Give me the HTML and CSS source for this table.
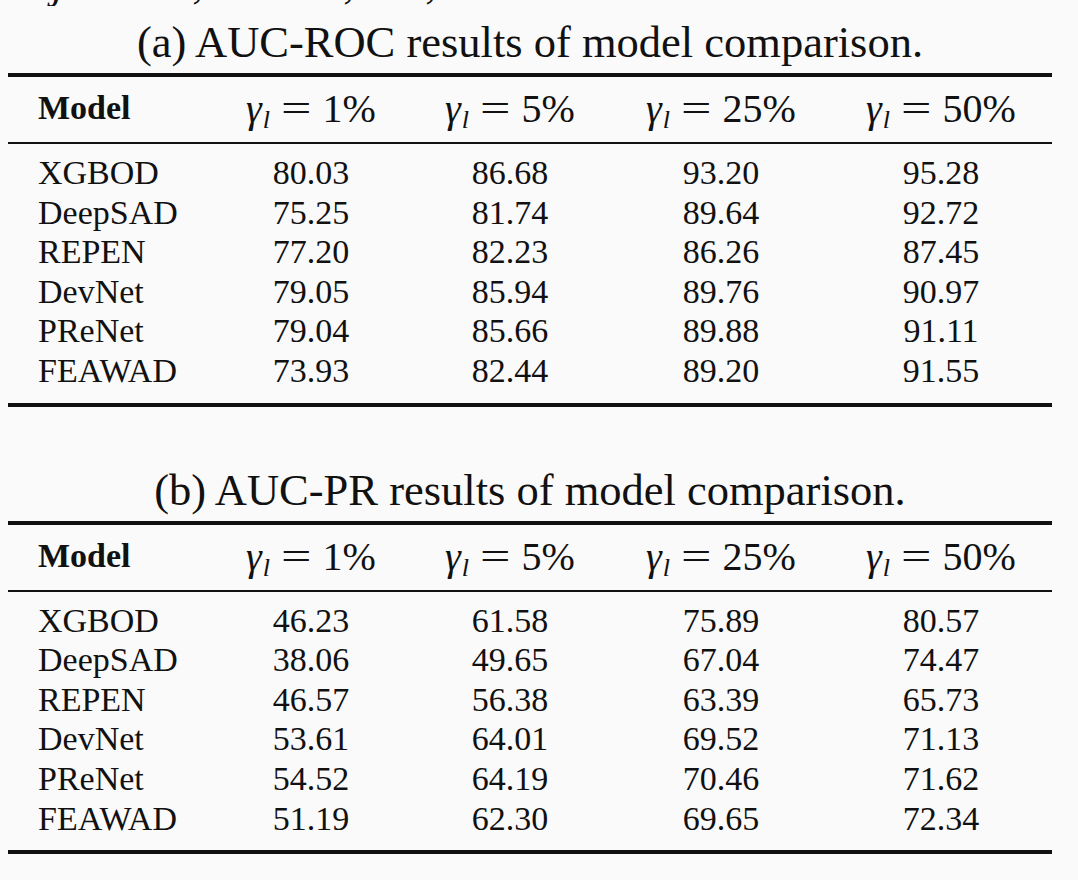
FILE: index.html
```html
<!DOCTYPE html>
<html lang="en">
<head>
<meta charset="utf-8">
<title>Model comparison results</title>
<link rel="stylesheet" href="styles.css">
</head>
<body>
<div class="fragment">
  <div class="fragment-line"><span class="f1">j</span><span class="f2">,</span><span class="f3">,</span><span class="f4">,</span></div>
</div>

<section class="subtable">
  <p class="caption">(a) AUC-ROC results of model comparison.</p>
  <table class="results">
    <colgroup>
      <col class="c-model"><col class="c1"><col class="c2"><col class="c3"><col class="c4"><col class="c-pad">
    </colgroup>
    <thead>
      <tr>
        <th class="model">Model</th>
        <th><span class="math"><i>γ</i><sub>l</sub><span class="eq">=</span>1%</span></th>
        <th><span class="math"><i>γ</i><sub>l</sub><span class="eq">=</span>5%</span></th>
        <th><span class="math"><i>γ</i><sub>l</sub><span class="eq">=</span>25%</span></th>
        <th><span class="math"><i>γ</i><sub>l</sub><span class="eq">=</span>50%</span></th>
        <th></th>
      </tr>
    </thead>
    <tbody>
      <tr><td class="model">XGBOD</td><td>80.03</td><td>86.68</td><td>93.20</td><td>95.28</td><td></td></tr>
      <tr><td class="model">DeepSAD</td><td>75.25</td><td>81.74</td><td>89.64</td><td>92.72</td><td></td></tr>
      <tr><td class="model">REPEN</td><td>77.20</td><td>82.23</td><td>86.26</td><td>87.45</td><td></td></tr>
      <tr><td class="model">DevNet</td><td>79.05</td><td>85.94</td><td>89.76</td><td>90.97</td><td></td></tr>
      <tr><td class="model">PReNet</td><td>79.04</td><td>85.66</td><td>89.88</td><td>91.11</td><td></td></tr>
      <tr><td class="model">FEAWAD</td><td>73.93</td><td>82.44</td><td>89.20</td><td>91.55</td><td></td></tr>
    </tbody>
  </table>
</section>

<section class="subtable second">
  <p class="caption">(b) AUC-PR results of model comparison.</p>
  <table class="results">
    <colgroup>
      <col class="c-model"><col class="c1"><col class="c2"><col class="c3"><col class="c4"><col class="c-pad">
    </colgroup>
    <thead>
      <tr>
        <th class="model">Model</th>
        <th><span class="math"><i>γ</i><sub>l</sub><span class="eq">=</span>1%</span></th>
        <th><span class="math"><i>γ</i><sub>l</sub><span class="eq">=</span>5%</span></th>
        <th><span class="math"><i>γ</i><sub>l</sub><span class="eq">=</span>25%</span></th>
        <th><span class="math"><i>γ</i><sub>l</sub><span class="eq">=</span>50%</span></th>
        <th></th>
      </tr>
    </thead>
    <tbody>
      <tr><td class="model">XGBOD</td><td>46.23</td><td>61.58</td><td>75.89</td><td>80.57</td><td></td></tr>
      <tr><td class="model">DeepSAD</td><td>38.06</td><td>49.65</td><td>67.04</td><td>74.47</td><td></td></tr>
      <tr><td class="model">REPEN</td><td>46.57</td><td>56.38</td><td>63.39</td><td>65.73</td><td></td></tr>
      <tr><td class="model">DevNet</td><td>53.61</td><td>64.01</td><td>69.52</td><td>71.13</td><td></td></tr>
      <tr><td class="model">PReNet</td><td>54.52</td><td>64.19</td><td>70.46</td><td>71.62</td><td></td></tr>
      <tr><td class="model">FEAWAD</td><td>51.19</td><td>62.30</td><td>69.65</td><td>72.34</td><td></td></tr>
    </tbody>
  </table>
</section>
</body>
</html>
```

FILE: styles.css
```css
html, body {
  margin: 0;
  padding: 0;
  background: #fafafa;
  color: #111;
  font-family: "Liberation Serif", "Times New Roman", serif;
}

body {
  width: 1078px;
  height: 880px;
  overflow: hidden;
}

.fragment {
  height: 6px;
  overflow: hidden;
}

.fragment-line {
  display: flex;
  font-size: 44px;
  line-height: 44px;
  margin-top: -38px;
}

.f1 { margin-left: 52px; font-style: italic; }
.f2 { margin-left: 128px; }
.f3 { margin-left: 140px; }
.f4 { margin-left: 71px; }

.subtable {
  margin: 10px 0 0 8px;
  width: 1044px;
}

.subtable.second {
  margin-top: 57px;
}

.caption {
  margin: 0 0 5px;
  font-size: 44.5px;
  line-height: 52px;
  text-align: center;
}

.results {
  width: 1044px;
  table-layout: fixed;
  border-collapse: separate;
  border-spacing: 0;
  border-top: 4px solid #111;
  border-bottom: 4px solid #111;
  font-size: 34px;
}

.c-model { width: 202px; }
.c1 { width: 202px; }
.c2 { width: 196px; }
.c3 { width: 226px; }
.c4 { width: 214px; }
.c-pad { width: 4px; }

.results th,
.results td {
  padding: 0;
  text-align: center;
  white-space: nowrap;
}

.results th {
  font-weight: normal;
  line-height: 40px;
  padding-top: 10px;
  padding-bottom: 13px;
  border-bottom: 2px solid #111;
}

.results th.model {
  font-weight: bold;
}

.results .model {
  text-align: left;
  padding-left: 30px;
}

.results td {
  line-height: 39.6px;
}

.results tbody tr:first-child td {
  padding-top: 9px;
}

.results tbody tr:last-child td {
  padding-bottom: 12px;
}

.math {
  font-size: 40px;
  position: relative;
  top: 2px;
}

.math i {
  font-style: italic;
}

.math sub {
  font-style: italic;
  font-size: 26px;
  line-height: 0;
  vertical-align: -6px;
  margin-left: 1px;
}

.math .eq {
  display: inline-block;
  margin: 0 15px;
  transform: scaleX(1.35);
}
```
